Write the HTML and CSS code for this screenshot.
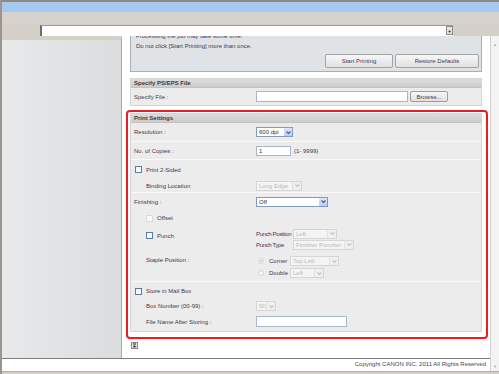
FILE: index.html
```html
<!DOCTYPE html>
<html lang="en">
<head>
    <meta charset="UTF-8">
    <title>Direct Print : PS/EPS File</title>
    <link rel="stylesheet" href="styles.css">
</head>
<body>
<div class="window">
    <div class="titlebar"></div>
    <div class="menubar"></div>
    <div class="addressbar">
        <div class="address-field"><span class="address-drop">▼</span></div>
    </div>
    <div class="frame">
        <div class="view">
            <div class="columns">
                <div class="sidebar"></div>
                <div class="main">
                    <div class="notice">
                        <p>Processing the job may take some time.</p>
                        <p>Do not click [Start Printing] more than once.</p>
                        <div class="actions">
                            <button class="btn-start">Start Printing</button>
                            <button class="btn-restore">Restore Defaults</button>
                        </div>
                    </div>

                    <div class="panel">
                        <div class="panel-title">Specify PS/EPS File</div>
                        <div class="panel-body">
                            <div class="row h17">
                                <span class="label">Specify File :</span>
                                <span class="value">
                                    <span class="input w152 h11"></span>
                                    <button class="browse">Browse...</button>
                                </span>
                            </div>
                        </div>
                    </div>

                    <div class="highlight">
                        <div class="panel">
                            <div class="panel-title">Print Settings</div>
                            <div class="panel-body">
                                <div class="group">
                                    <div class="row h18">
                                        <span class="label">Resolution :</span>
                                        <span class="value"><span class="select w37"><span class="text">600 dpi</span><span class="arrow"><svg viewBox="0 0 7 7"><path d="M1.5 2.5 L3.5 4.5 L5.5 2.5"/></svg></span></span></span>
                                    </div>
                                </div>
                                <div class="group">
                                    <div class="row h17">
                                        <span class="label">No. of Copies :</span>
                                        <span class="value"><span class="input w35"><span class="text">1</span></span><span class="hint">(1- 9999)</span></span>
                                    </div>
                                </div>
                                <div class="group">
                                    <div class="row h19">
                                        <span class="label check-label"><span class="check"></span>Print 2-Sided</span>
                                    </div>
                                    <div class="row h13">
                                        <span class="label sub">Binding Location</span>
                                        <span class="value"><span class="select disabled w46"><span class="text">Long Edge</span><span class="arrow"><svg viewBox="0 0 7 7"><path d="M1.5 2.5 L3.5 4.5 L5.5 2.5"/></svg></span></span></span>
                                    </div>
                                </div>
                                <div class="group">
                                    <div class="row h17">
                                        <span class="label">Finishing :</span>
                                        <span class="value"><span class="select w72"><span class="text">Off</span><span class="arrow"><svg viewBox="0 0 7 7"><path d="M1.5 2.5 L3.5 4.5 L5.5 2.5"/></svg></span></span></span>
                                    </div>
                                    <div class="row h16">
                                        <span class="label sub check-label"><span class="check disabled"></span>Offset</span>
                                    </div>
                                    <div class="row h26 top">
                                        <span class="label sub check-label punch"><span class="check"></span>Punch</span>
                                        <span class="value stack">
                                            <span class="pair"><span class="pair-label">Punch Position</span><span class="select disabled w44"><span class="text">Left</span><span class="arrow"><svg viewBox="0 0 7 7"><path d="M1.5 2.5 L3.5 4.5 L5.5 2.5"/></svg></span></span></span>
                                            <span class="pair"><span class="pair-label">Punch Type</span><span class="select disabled w61"><span class="text">Finisher Puncher</span><span class="arrow"><svg viewBox="0 0 7 7"><path d="M1.5 2.5 L3.5 4.5 L5.5 2.5"/></svg></span></span></span>
                                        </span>
                                    </div>
                                    <div class="row h29 top">
                                        <span class="label sub staple">Staple Position :</span>
                                        <span class="value stack staple-stack">
                                            <span class="pair"><span class="radio-label"><span class="radio checked"></span>Corner</span><span class="select disabled w49"><span class="text">Top Left</span><span class="arrow"><svg viewBox="0 0 7 7"><path d="M1.5 2.5 L3.5 4.5 L5.5 2.5"/></svg></span></span></span>
                                            <span class="pair"><span class="radio-label"><span class="radio"></span>Double</span><span class="select disabled w34"><span class="text">Left</span><span class="arrow"><svg viewBox="0 0 7 7"><path d="M1.5 2.5 L3.5 4.5 L5.5 2.5"/></svg></span></span></span>
                                        </span>
                                    </div>
                                </div>
                                <div class="group">
                                    <div class="row h18">
                                        <span class="label check-label"><span class="check"></span>Store in Mail Box</span>
                                    </div>
                                    <div class="row h12">
                                        <span class="label sub">Box Number (00-99) :</span>
                                        <span class="value"><span class="select disabled w20"><span class="text">00</span><span class="arrow"><svg viewBox="0 0 7 7"><path d="M1.5 2.5 L3.5 4.5 L5.5 2.5"/></svg></span></span></span>
                                    </div>
                                    <div class="row h19">
                                        <span class="label sub">File Name After Storing :</span>
                                        <span class="value"><span class="input w91 h11"></span></span>
                                    </div>
                                </div>
                            </div>
                        </div>
                    </div>

                    <div class="top-link">
                        <svg viewBox="0 0 7 7" width="7" height="7">
                            <rect x="0.5" y="0.5" width="6" height="6" fill="#e4e4e4" stroke="#8a8a8a"/>
                            <path d="M2 2 H5" stroke="#222" stroke-width="1"/>
                            <path d="M1.8 5.2 L3.5 3 L5.2 5.2 Z" fill="#222"/>
                        </svg>
                    </div>
                </div>
            </div>
            <div class="footer">Copyright CANON INC. 2011 All Rights Reserved</div>
        </div>
        <div class="scrollbar"><span>▲</span><span>▼</span></div>
    </div>
    <div class="statusbar"></div>
</div>
</body>
</html>
```

FILE: styles.css
```css
body {
    margin: 0;
    font-family: "Liberation Sans", Arial, sans-serif;
    font-size: 6px;
    color: #45384f;
    background: #d4d0c8;
}

.window {
    width: 499px;
    height: 374px;
    display: flex;
    flex-direction: column;
    background: #d4d0c8;
    border-left: 2px solid #9a968e;
    box-sizing: border-box;
    overflow: hidden;
}

.titlebar {
    height: 10px;
    border-top: 2px solid #8c8a85;
    background: #a8c9ef;
}

.menubar {
    height: 12px;
    background: #d6d3cc;
}

.addressbar {
    height: 12px;
    padding-left: 38px;
    box-sizing: border-box;
}

.address-field {
    width: 413px;
    height: 11px;
    margin-top: 1px;
    box-sizing: border-box;
    background: #fff;
    border-left: 2px solid #6e6e6e;
    border-top: 1px solid #9a9a9a;
    display: flex;
    justify-content: flex-end;
}

.address-drop {
    width: 7px;
    height: 9px;
    border: 1px solid #8a8a8a;
    background: #e6e4df;
    color: #111;
    font-size: 4px;
    line-height: 9px;
    text-align: center;
    box-sizing: border-box;
}

.frame {
    flex: 1;
    display: flex;
    background: #fff;
    min-height: 0;
}

.view {
    flex: 1;
    display: flex;
    flex-direction: column;
}

.columns {
    flex: 1;
    display: flex;
    min-height: 0;
}

.sidebar {
    width: 119px;
    border-top: 4px solid #d4d0c8;
    border-right: 1px solid #a9a9a9;
    background: linear-gradient(to right, #e7e9ea, #dadcdd);
}

.main {
    flex: 1;
    padding: 0 8px;
    overflow: hidden;
}

.notice {
    margin-top: -9px;
    border: 1px solid #a9afb4;
    background: #dfe3e6;
    padding: 4px 2px 3px 5px;
}

.notice p {
    margin: 0;
    line-height: 8px;
}

.notice p + p {
    margin-top: 2px;
}

.actions {
    display: flex;
    justify-content: flex-end;
    gap: 2px;
    margin-top: 4px;
}

button {
    font-family: inherit;
    font-size: 6px;
    color: #45384f;
    height: 14px;
    padding: 0;
    border: 1px solid #a3a3a3;
    border-radius: 2px;
    background: linear-gradient(#f7f7f7, #e1e1e1);
}

.btn-start {
    width: 68px;
}

.btn-restore {
    width: 84px;
}

.panel {
    margin-top: 6px;
    border: 1px solid #d6d6d6;
    background: #ececec;
}

.panel-title {
    height: 8px;
    line-height: 8px;
    padding-left: 3px;
    font-weight: bold;
    color: #3b3b3b;
    background: linear-gradient(#dcdcdc, #cbcbcb);
    border-bottom: 1px solid #c2c2c2;
}

.group + .group {
    border-top: 1px solid #f9f9f9;
}

.row {
    display: grid;
    grid-template-columns: 122px auto;
    align-items: center;
    padding-left: 3px;
}

.row.top {
    align-items: start;
}

.h12 { height: 12px; }
.h13 { height: 13px; }
.h16 { height: 16px; }
.h17 { height: 17px; }
.h18 { height: 18px; }
.h19 { height: 19px; }
.h26 { height: 26px; }
.h29 { height: 29px; }

.label {
    white-space: nowrap;
}

.label.sub {
    padding-left: 12px;
}

.check-label {
    display: flex;
    align-items: center;
    gap: 4px;
}

.check-label .check {
    margin-left: 1px;
}

.check-label.sub .check {
    margin-left: 0;
}

.punch {
    margin-top: 6px;
}

.staple {
    margin-top: 5px;
}

.value {
    display: flex;
    align-items: center;
}

.stack {
    flex-direction: column;
    align-items: stretch;
    padding-top: 2px;
}

.staple-stack {
    padding-top: 3px;
}

.pair {
    display: grid;
    grid-template-columns: 37px auto;
    align-items: center;
    height: 11px;
}

.staple-stack .pair {
    grid-template-columns: 34px auto;
    height: 12px;
}

.pair-label {
    white-space: nowrap;
    letter-spacing: -0.35px;
}

.radio-label {
    display: flex;
    align-items: center;
    gap: 5px;
    padding-left: 2px;
}

.radio {
    width: 6px;
    height: 6px;
    border: 1px solid #d3d3d3;
    border-radius: 50%;
    background: #f7f7f7;
    box-sizing: border-box;
    display: flex;
    align-items: center;
    justify-content: center;
}

.radio.checked::after {
    content: "";
    width: 2px;
    height: 2px;
    border-radius: 50%;
    background: #bdbdbd;
}

.check {
    width: 7px;
    height: 7px;
    border: 1px solid #5a7da3;
    background: linear-gradient(#f2f2f2, #fff);
    box-sizing: border-box;
}

.check.disabled {
    border-color: #dadada;
    background: #fafafa;
}

.input {
    height: 10px;
    border: 1px solid #a5b9cc;
    background: #fff;
    box-sizing: border-box;
    display: flex;
    align-items: center;
    color: #333;
}

.input .text {
    padding-left: 2px;
}

.h11 { height: 11px; }

.hint {
    margin-left: 3px;
}

.browse {
    width: 38px;
    height: 11px;
    margin-left: 2px;
    border-color: #9c9c9c;
}

.select {
    height: 10px;
    border: 1px solid #7f9db9;
    background: #fff;
    box-sizing: border-box;
    display: flex;
    color: #333;
    overflow: hidden;
}

.select .text {
    flex: 1;
    padding-left: 2px;
    line-height: 8px;
    white-space: nowrap;
    overflow: hidden;
}

.select .arrow {
    width: 8px;
    background: linear-gradient(#dbe6fc, #b9cdf4);
    display: flex;
    align-items: center;
    justify-content: center;
}

.select svg {
    width: 7px;
    height: 7px;
    fill: none;
    stroke: #4d6185;
    stroke-width: 1.2;
}

.select.disabled {
    border-color: #d6d6d6;
    background: #f4f4f4;
    color: #b9b9b9;
}

.select.disabled .arrow {
    background: #efefef;
    border-left: 1px solid #e2e2e2;
}

.select.disabled svg {
    stroke: #c6c6c6;
}

.w20 { width: 20px; }
.w34 { width: 34px; }
.w35 { width: 35px; }
.w37 { width: 37px; }
.w44 { width: 44px; }
.w46 { width: 46px; }
.w49 { width: 49px; }
.w61 { width: 61px; }
.w72 { width: 72px; }
.w91 { width: 91px; }
.w152 { width: 152px; }

.highlight {
    margin: 4px -6px 0 -4px;
    border: 2px solid #ec1c24;
    border-radius: 4px;
    padding: 1px 4px 5px 2px;
}

.highlight .panel {
    margin-top: 0;
}

.top-link {
    margin: 3px 0 0 1px;
    height: 7px;
}

.top-link svg {
    display: block;
}

.footer {
    height: 12px;
    line-height: 10px;
    border-top: 1px solid #7d7d7d;
    text-align: right;
    padding-right: 4px;
    color: #4d4158;
}

.scrollbar {
    width: 8px;
    border-left: 1px solid #d2d2d2;
    background: #f3f3f3;
    display: flex;
    flex-direction: column;
    justify-content: space-between;
    align-items: center;
    padding: 6px 0 2px;
    color: #a8a8a8;
    font-size: 4px;
    line-height: 5px;
}

.statusbar {
    height: 3px;
    background: #d4d0c8;
    border-top: 1px solid #b4b0a8;
    box-sizing: border-box;
}
```
